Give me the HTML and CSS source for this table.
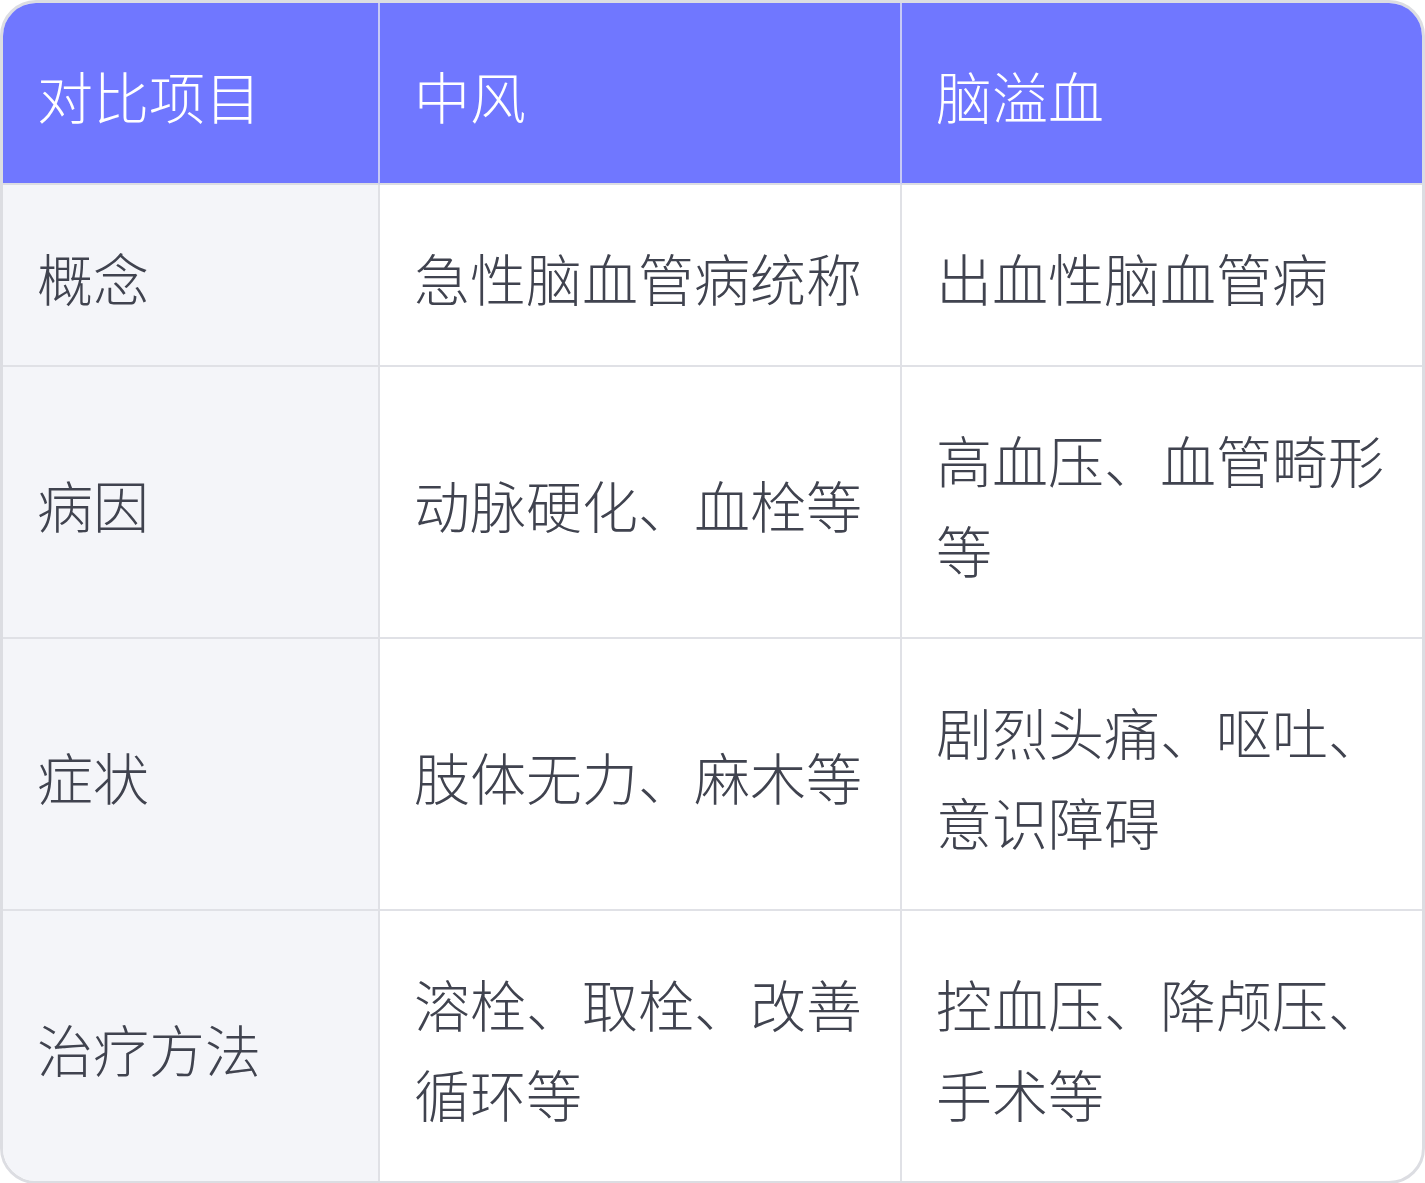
FILE: index.html
```html
<!DOCTYPE html>
<html lang="zh-CN">
<head>
<meta charset="utf-8">
<link rel="stylesheet" href="styles.css">
</head>
<body>
<div class="card">
  <table class="cmp">
    <colgroup>
      <col class="c1"><col class="c2"><col class="c3">
    </colgroup>
    <thead>
      <tr><th>对比项目</th><th>中风</th><th>脑溢血</th></tr>
    </thead>
    <tbody>
      <tr><td>概念</td><td>急性脑血管病统称</td><td>出血性脑血管病</td></tr>
      <tr><td>病因</td><td>动脉硬化、血栓等</td><td>高血压、血管畸形等</td></tr>
      <tr><td>症状</td><td>肢体无力、麻木等</td><td>剧烈头痛、呕吐、意识障碍</td></tr>
      <tr><td>治疗方法</td><td>溶栓、取栓、改善循环等</td><td>控血压、降颅压、手术等</td></tr>
    </tbody>
  </table>
</div>
</body>
</html>
```

FILE: styles.css
```css
html, body {
  margin: 0;
  padding: 0;
  background: #ffffff;
}
.card {
  width: 1425px;
  box-sizing: border-box;
  border: 3px solid #dcdde2;
  border-radius: 36px;
  overflow: hidden;
  background: #ffffff;
}
.cmp {
  width: 100%;
  border-collapse: separate;
  border-spacing: 0;
  table-layout: fixed;
  font-family: "Noto Sans CJK SC", "Noto Sans", sans-serif;
  font-size: 56px;
  line-height: 90px;
  color: #40434f;
}
.c1 { width: 377px; }
.c2 { width: 522px; }
.c3 { width: 520px; }
.cmp th, .cmp td {
  text-align: left;
  vertical-align: middle;
  padding: 47px 34px 43px;
  border-right: 2px solid #e0e1e6;
  border-bottom: 2px solid #e0e1e6;
  font-weight: 300;
}
.cmp th:last-child, .cmp td:last-child {
  border-right: none;
}
.cmp tbody tr:last-child td {
  border-bottom: none;
}
.cmp th {
  background: #7077ff;
  color: #ffffff;
  border-right-color: #c7c9f6;
  border-bottom-color: #dcdde2;
}
.cmp td:first-child {
  background: #f4f5f9;
}
```
